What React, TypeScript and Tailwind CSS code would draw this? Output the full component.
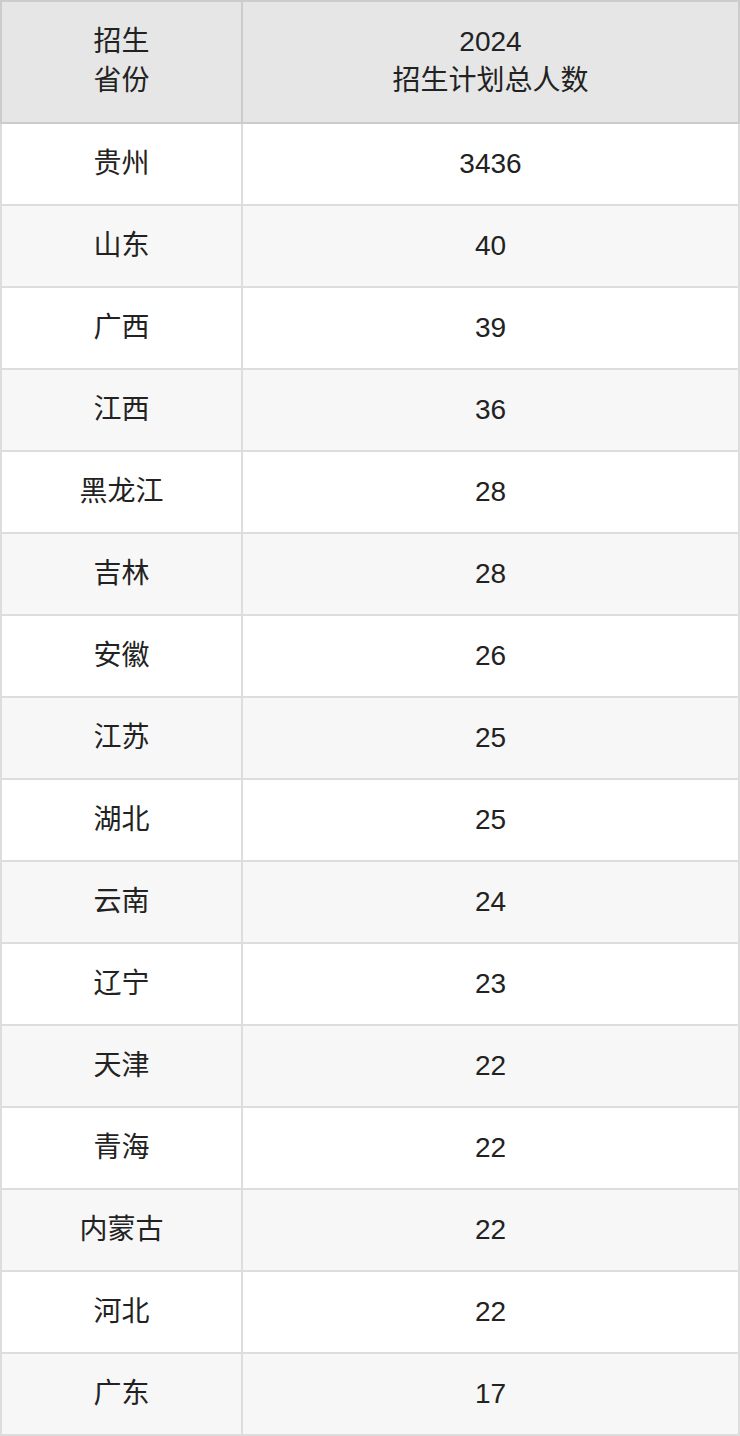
const rows: [string, string][] = [
  ["贵州", "3436"],
  ["山东", "40"],
  ["广西", "39"],
  ["江西", "36"],
  ["黑龙江", "28"],
  ["吉林", "28"],
  ["安徽", "26"],
  ["江苏", "25"],
  ["湖北", "25"],
  ["云南", "24"],
  ["辽宁", "23"],
  ["天津", "22"],
  ["青海", "22"],
  ["内蒙古", "22"],
  ["河北", "22"],
  ["广东", "17"],
];

export default function App() {
  return (
    <div
      className="w-[740px] bg-white text-[28px] leading-[36px] text-[#222]"
      style={{ fontFamily: '"Liberation Sans", "Noto Sans CJK SC", sans-serif' }}
    >
      {/* Header */}
      <div className="flex h-[124px] border-y-2 border-[#cccccc] bg-[#e6e6e6] leading-[39px]">
        <div className="flex w-[243px] shrink-0 items-center justify-center border-x-2 border-[#cccccc] pb-[3px] text-center">
          招生
          <br />
          省份
        </div>
        <div className="flex flex-1 items-center justify-center border-r-2 border-[#cccccc] pb-[3px] text-center">
          2024
          <br />
          招生计划总人数
        </div>
      </div>

      {/* Body */}
      {rows.map(([province, count], i) => (
        <div
          key={province}
          className={`flex h-[82px] border-b-2 border-[#dddddd] ${i % 2 === 1 ? "bg-[#f7f7f7]" : "bg-white"}`}
        >
          <div className="flex w-[243px] shrink-0 items-center justify-center border-x-2 border-[#dddddd]">
            {province}
          </div>
          <div className="flex flex-1 items-center justify-center border-r-2 border-[#dddddd]">
            {count}
          </div>
        </div>
      ))}
    </div>
  );
}
